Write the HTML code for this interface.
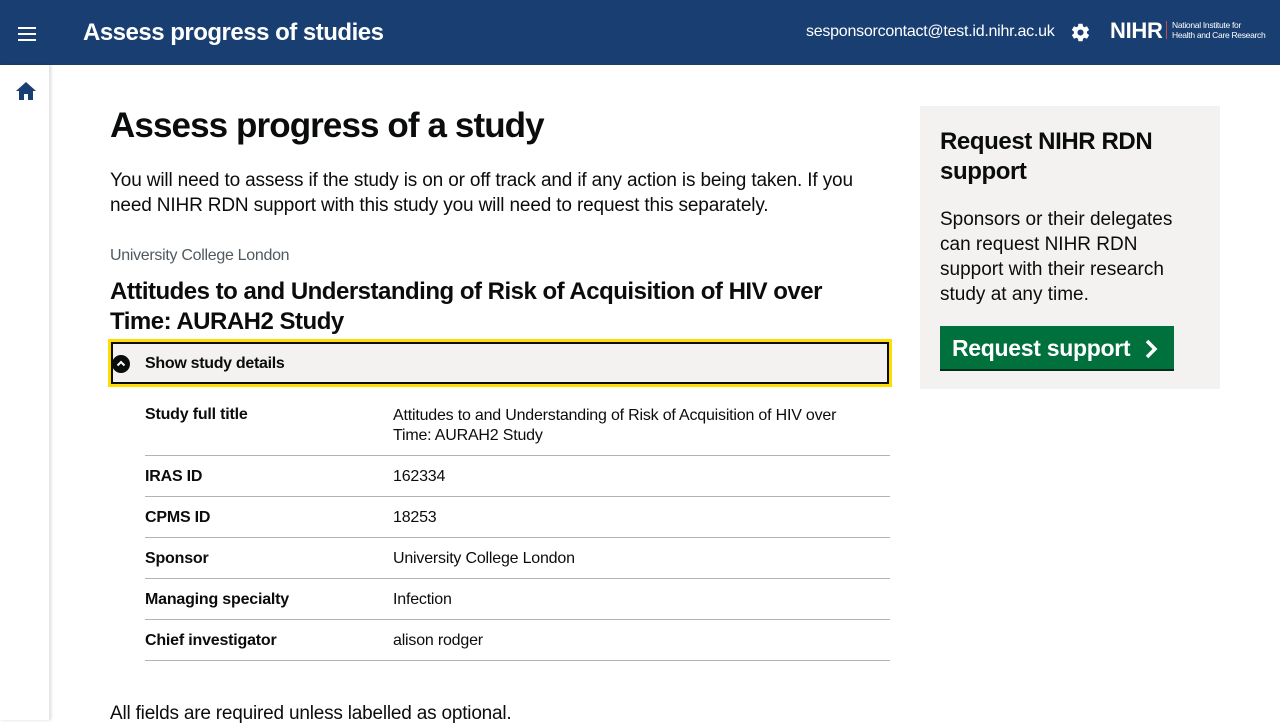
<!DOCTYPE html>
<html><head><meta charset="utf-8"><style>
*{box-sizing:border-box;margin:0;padding:0}
body{width:1280px;height:720px;overflow:hidden;font-family:"Liberation Sans",Roboto,sans-serif;color:#0b0c0c;background:#fff;position:relative}
.hdr{position:absolute;left:0;top:0;width:1280px;height:65px;background:#193e72;color:#fff}
.side{position:absolute;left:0;top:65px;width:50px;height:655px;background:#fff;box-shadow:1px 0 3px rgba(0,0,0,.15);border-right:1px solid #e5e5e5}
.abs{position:absolute}
.row{position:absolute;left:145px;width:745px;border-bottom:1px solid #b1b4b6;font-size:16px}
.row b{position:absolute;left:0;top:2px;font-weight:700;letter-spacing:-.2px}
.row span{position:absolute;left:248px;top:2px;letter-spacing:-.2px}
</style></head><body>
<div class="hdr">
 <div class="abs" style="left:18px;top:27px;width:18px;height:2px;background:#fff;box-shadow:0 6px 0 #fff,0 12px 0 #fff"></div>
 <div class="abs" style="left:83px;top:19px;font-size:24px;font-weight:700;letter-spacing:-.5px">Assess progress of studies</div>
 <div class="abs" style="left:806px;top:23px;font-size:16px;letter-spacing:-.25px">sesponsorcontact@test.id.nihr.ac.uk</div>
 <svg class="abs" style="left:1070px;top:22px" width="21" height="21" viewBox="0 0 24 24"><path fill="#fff" d="M19.4 13c.04-.33.06-.66.06-1s-.02-.67-.06-1l2.1-1.65c.2-.15.25-.42.13-.64l-2-3.46c-.12-.22-.39-.3-.61-.22l-2.49 1c-.52-.4-1.080-.73-1.69-.98l-.38-2.65A.49.49 0 0 0 14 2h-4c-.25 0-.46.18-.49.42l-.38 2.65c-.61.25-1.17.59-1.69.98l-2.49-1c-.23-.09-.49 0-.61.22l-2 3.46c-.13.22-.07.49.12.64L4.57 11c-.04.33-.07.67-.07 1s.03.67.07 1l-2.11 1.65c-.19.15-.24.42-.12.64l2 3.46c.12.22.39.3.61.22l2.49-1c.52.4 1.08.73 1.69.98l.38 2.65c.03.24.24.42.49.42h4c.25 0 .46-.18.49-.42l.38-2.65c.61-.25 1.17-.59 1.69-.98l2.49 1c.23.09.49 0 .61-.22l2-3.46c.12-.22.07-.49-.12-.64L19.4 13zM12 15.5a3.5 3.5 0 1 1 0-7 3.5 3.5 0 0 1 0 7z"/></svg>
 <div class="abs" style="left:1110px;top:18px;font-size:22px;font-weight:700;letter-spacing:-.3px">NIHR</div>
 <div class="abs" style="left:1166px;top:21px;width:1px;height:18px;background:#c0504d"></div>
 <div class="abs" style="left:1172px;top:20px;font-size:8.5px;line-height:10px;letter-spacing:-.3px">National Institute for<br>Health and Care Research</div>
</div>
<div class="side"><svg class="abs" style="left:15px;top:16px" width="22" height="20" viewBox="0 0 22 20"><path fill="#193e72" d="M11 1 1 10h3v9h5v-6h4v6h5v-9h3z"/></svg></div>
<div class="abs" style="left:110px;top:106px;font-size:35px;font-weight:700;letter-spacing:-.9px">Assess progress of a study</div>
<div class="abs" style="left:110px;top:168px;width:780px;font-size:19px;line-height:25px;letter-spacing:-.15px">You will need to assess if the study is on or off track and if any action is being taken. If you need NIHR RDN support with this study you will need to request this separately.</div>
<div class="abs" style="left:110px;top:247px;font-size:16px;color:#505a5f;letter-spacing:-.3px">University College London</div>
<div class="abs" style="left:110px;top:277px;width:760px;font-size:24px;line-height:30px;font-weight:700;letter-spacing:-.5px">Attitudes to and Understanding of Risk of Acquisition of HIV over Time: AURAH2 Study</div>
<div class="abs" style="left:108px;top:339px;width:784px;height:48px;background:#ffdd00;padding:3px"><div style="width:100%;height:100%;background:#f3f2f1;border:2px solid #0b0c0c;position:relative">
<div class="abs" style="left:-1px;top:11px;width:18px;height:18px;border-radius:50%;background:#0b0c0c"><svg width="18" height="18" viewBox="0 0 18 18"><path d="M5.5 10.5 9 7l3.5 3.5" stroke="#fff" stroke-width="2" fill="none"/></svg></div>
<div class="abs" style="left:32px;top:11px;font-size:16px;font-weight:700;letter-spacing:-.3px">Show study details</div></div></div>
<div class="row" style="top:404px;height:52px"><b>Study full title</b><span style="width:480px;line-height:20px">Attitudes to and Understanding of Risk of Acquisition of HIV over Time: AURAH2 Study</span></div>
<div class="row" style="top:466px;height:31px"><b>IRAS ID</b><span>162334</span></div>
<div class="row" style="top:507px;height:31px"><b>CPMS ID</b><span>18253</span></div>
<div class="row" style="top:548px;height:31px"><b>Sponsor</b><span>University College London</span></div>
<div class="row" style="top:589px;height:31px"><b>Managing specialty</b><span>Infection</span></div>
<div class="row" style="top:630px;height:31px"><b>Chief investigator</b><span>alison rodger</span></div>
<div class="abs" style="left:110px;top:703px;font-size:19px;letter-spacing:-.2px">All fields are required unless labelled as optional.</div>
<div class="abs" style="left:920px;top:106px;width:300px;height:283px;background:#f3f2f1">
 <div class="abs" style="left:20px;top:21px;font-size:24px;line-height:30px;font-weight:700;letter-spacing:-.4px">Request NIHR RDN<br>support</div>
 <div class="abs" style="left:20px;top:101px;width:250px;font-size:19px;line-height:25px">Sponsors or their delegates can request NIHR RDN support with their research study at any time.</div>
 <div class="abs" style="left:20px;top:220px;width:234px;height:43px;background:#00703c;box-shadow:0 2px 0 #002d18;color:#fff;font-size:23px;font-weight:700;padding:9px 12px;letter-spacing:-.3px">Request support<svg class="abs" style="left:204px;top:13px" width="14" height="20" viewBox="0 0 14 20"><path d="M3 2l8 8-8 8" stroke="#fff" stroke-width="3.5" fill="none"/></svg></div>
</div>
</body></html>
